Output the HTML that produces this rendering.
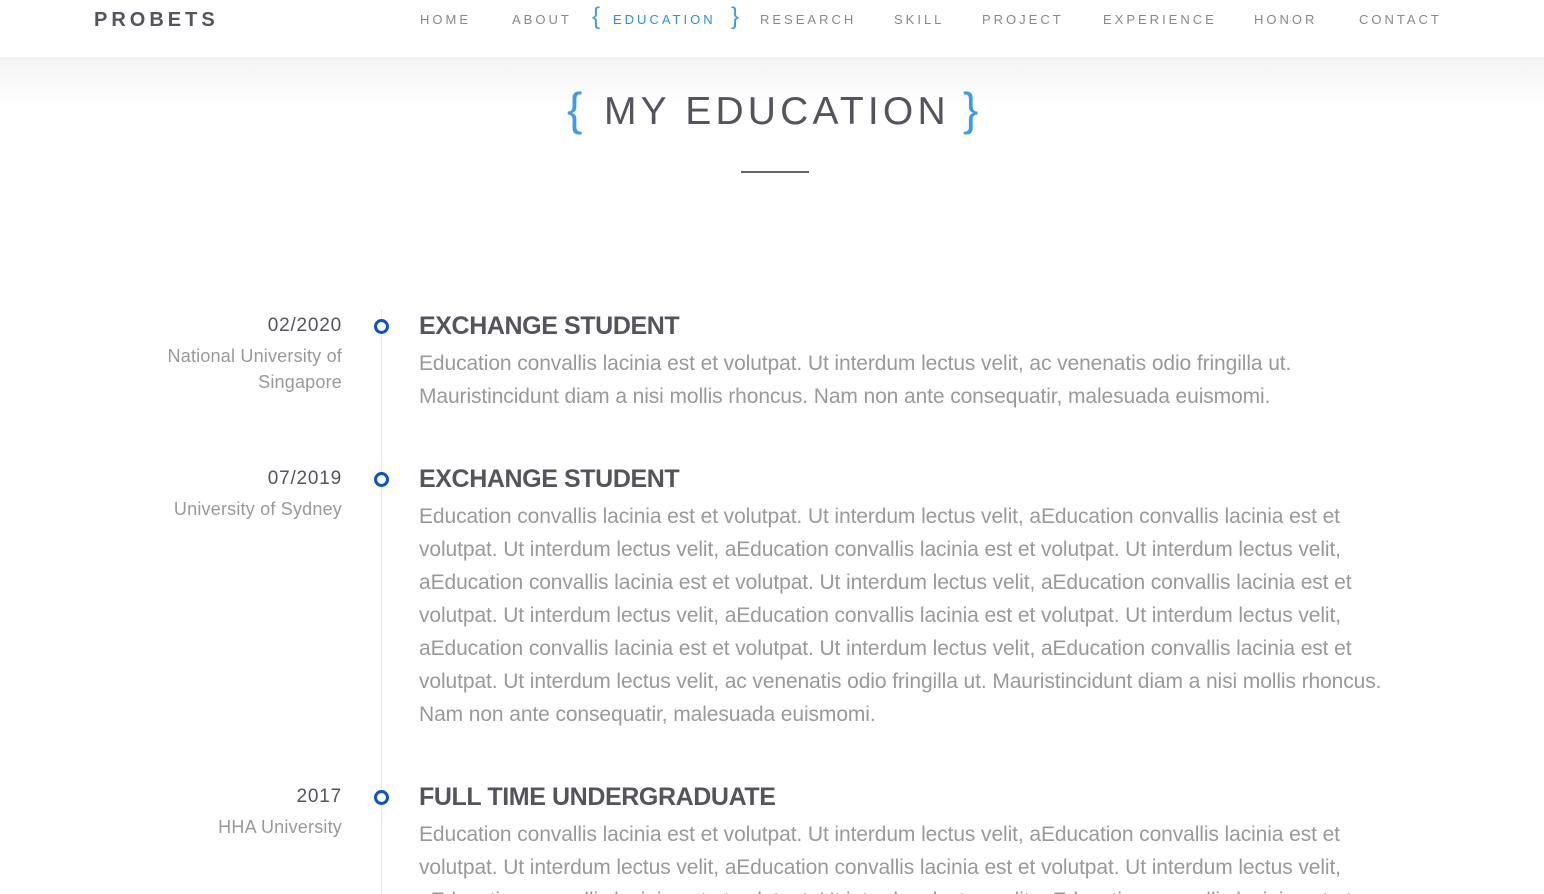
<!DOCTYPE html>
<html><head><meta charset="utf-8"><style>
*{margin:0;padding:0;box-sizing:border-box}
html,body{width:1544px;height:894px;overflow:hidden}
body{background:#fff;font-family:"Liberation Sans",sans-serif;position:relative}
.hdr{position:absolute;top:0;left:0;width:1544px;height:57px;background:#fff;z-index:2}
.shade{position:absolute;top:57px;left:0;width:1544px;height:50px;background:linear-gradient(#f3f3f3,#fff)}
.logo{position:absolute;left:94px;top:9px;font-size:20px;font-weight:bold;letter-spacing:4px;color:#55535c}
.nav{position:absolute;top:12px;font-size:13px;letter-spacing:3px;color:#888}
.blue{color:#2c8fe6}
.br{position:absolute;font-weight:300;color:#3d9be9}
.title{position:absolute;top:90px;left:604px;font-size:39px;letter-spacing:4.2px;color:#55535c}
.line{position:absolute;left:741px;top:171px;width:68px;height:2px;background:#666}
.tl{position:absolute;left:381px;top:310px;width:1px;height:600px;background:#e8e8e8}
.dot{position:absolute;left:374px;width:15px;height:15px;border:3px solid #0a54c7;border-radius:50%;background:#fff}
.date{position:absolute;right:1202px;font-size:19px;color:#55535c;letter-spacing:0.8px}
.uni{position:absolute;right:1202px;font-size:18px;color:#999;text-align:right;line-height:26px;letter-spacing:0.2px}
.h{position:absolute;left:419px;font-weight:bold;font-size:25px;letter-spacing:-0.4px;color:#55535c}
.p{position:absolute;left:419px;font-size:21px;line-height:33px;color:#999;white-space:nowrap;letter-spacing:-0.1px}
</style></head><body>
<div class="hdr">
<div class="logo">PROBETS</div>
<div class="nav" style="left:420px">HOME</div>
<div class="nav" style="left:512px">ABOUT</div>
<div class="br" style="left:592px;top:3px;font-size:24px">{</div>
<div class="nav blue" style="left:613px">EDUCATION</div>
<div class="br" style="left:731px;top:3px;font-size:24px">}</div>
<div class="nav" style="left:760px">RESEARCH</div>
<div class="nav" style="left:894px">SKILL</div>
<div class="nav" style="left:982px">PROJECT</div>
<div class="nav" style="left:1103px">EXPERIENCE</div>
<div class="nav" style="left:1254px">HONOR</div>
<div class="nav" style="left:1359px">CONTACT</div>
</div>
<div class="shade"></div>
<div class="br" style="left:567px;top:82px;font-size:46px">{</div>
<div class="title">MY EDUCATION</div>
<div class="br" style="left:963px;top:82px;font-size:46px">}</div>
<div class="line"></div>
<div class="tl"></div>

<div class="dot" style="top:319px"></div>
<div class="date" style="top:315px">02/2020</div>
<div class="uni" style="top:343px">National University of<br>Singapore</div>
<div class="h" style="top:312px">EXCHANGE STUDENT</div>
<div class="p" style="top:347px">Education convallis lacinia est et volutpat. Ut interdum lectus velit, ac venenatis odio fringilla ut.<br>Mauristincidunt diam a nisi mollis rhoncus. Nam non ante consequatir, malesuada euismomi.</div>

<div class="dot" style="top:472px"></div>
<div class="date" style="top:468px">07/2019</div>
<div class="uni" style="top:496px">University of Sydney</div>
<div class="h" style="top:465px">EXCHANGE STUDENT</div>
<div class="p" style="top:500px">Education convallis lacinia est et volutpat. Ut interdum lectus velit, aEducation convallis lacinia est et<br>volutpat. Ut interdum lectus velit, aEducation convallis lacinia est et volutpat. Ut interdum lectus velit,<br>aEducation convallis lacinia est et volutpat. Ut interdum lectus velit, aEducation convallis lacinia est et<br>volutpat. Ut interdum lectus velit, aEducation convallis lacinia est et volutpat. Ut interdum lectus velit,<br>aEducation convallis lacinia est et volutpat. Ut interdum lectus velit, aEducation convallis lacinia est et<br>volutpat. Ut interdum lectus velit, ac venenatis odio fringilla ut. Mauristincidunt diam a nisi mollis rhoncus.<br>Nam non ante consequatir, malesuada euismomi.</div>

<div class="dot" style="top:790px"></div>
<div class="date" style="top:786px">2017</div>
<div class="uni" style="top:814px">HHA University</div>
<div class="h" style="top:783px">FULL TIME UNDERGRADUATE</div>
<div class="p" style="top:818px">Education convallis lacinia est et volutpat. Ut interdum lectus velit, aEducation convallis lacinia est et<br>volutpat. Ut interdum lectus velit, aEducation convallis lacinia est et volutpat. Ut interdum lectus velit,<br>aEducation convallis lacinia est et volutpat. Ut interdum lectus velit, aEducation convallis lacinia est et</div>
</body></html>
